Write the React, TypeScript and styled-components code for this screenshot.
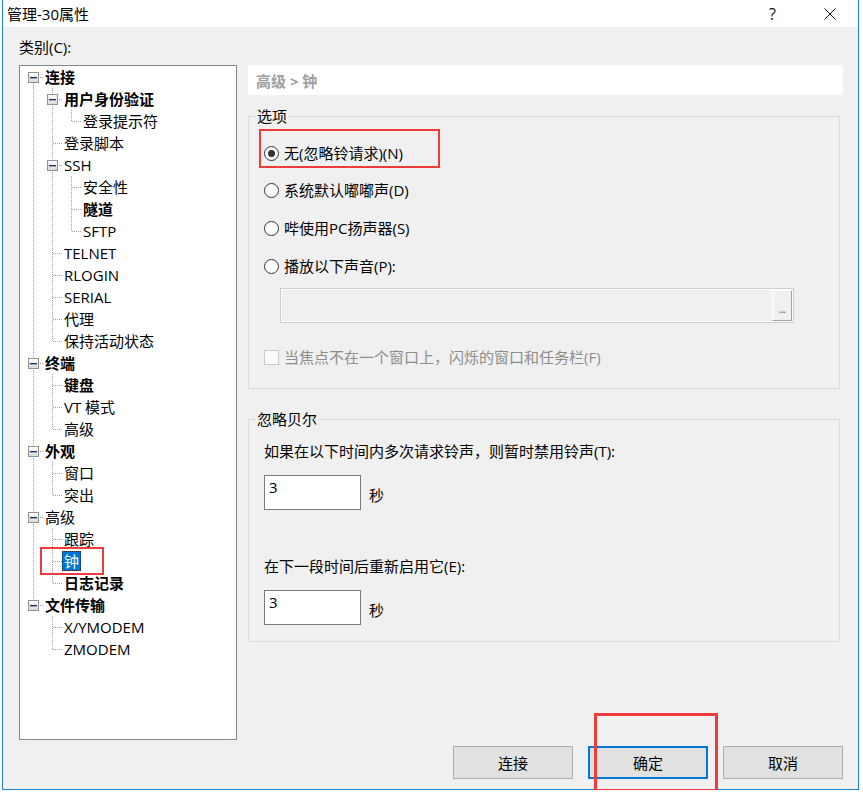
import React from 'react';
import styled, { createGlobalStyle } from 'styled-components';

const GlobalStyle = createGlobalStyle`
  html, body {
    margin: 0;
    padding: 0;
    background: #ffffff;
  }
  body {
    font-family: "Open Sans", "Noto Sans CJK SC", sans-serif;
    font-size: 15px;
    color: #000;
  }
  * {
    box-sizing: border-box;
  }
`;

type TreeNode = {
  label: string;
  bold?: boolean;
  selected?: boolean;
  marked?: boolean;
  children?: TreeNode[];
};

type TreeRow = {
  node: TreeNode;
  level: number;
  guides: boolean[];
  up: boolean;
  down: boolean;
};

const categories: TreeNode[] = [
  {
    label: '连接',
    bold: true,
    children: [
      { label: '用户身份验证', bold: true, children: [{ label: '登录提示符' }] },
      { label: '登录脚本' },
      {
        label: 'SSH',
        children: [{ label: '安全性' }, { label: '隧道', bold: true }, { label: 'SFTP' }],
      },
      { label: 'TELNET' },
      { label: 'RLOGIN' },
      { label: 'SERIAL' },
      { label: '代理' },
      { label: '保持活动状态' },
    ],
  },
  {
    label: '终端',
    bold: true,
    children: [{ label: '键盘', bold: true }, { label: 'VT 模式' }, { label: '高级' }],
  },
  {
    label: '外观',
    bold: true,
    children: [{ label: '窗口' }, { label: '突出' }],
  },
  {
    label: '高级',
    children: [
      { label: '跟踪' },
      { label: '钟', selected: true, marked: true },
      { label: '日志记录', bold: true },
    ],
  },
  {
    label: '文件传输',
    bold: true,
    children: [{ label: 'X/YMODEM' }, { label: 'ZMODEM' }],
  },
];

// flatten the tree, remembering which guide lines each row has to draw
const flatten = (nodes: TreeNode[], level: number, guides: boolean[]): TreeRow[] =>
  nodes.flatMap((node, i) => {
    const last = i === nodes.length - 1;
    const row: TreeRow = { node, level, guides, up: level > 0 || i > 0, down: !last };
    return [row, ...flatten(node.children ?? [], level + 1, [...guides, !last])];
  });

const rows = flatten(categories, 0, []);

const Window = styled.div`
  width: 857px;
  height: 790px;
  margin-left: 2px;
  border: 1px solid #1883d7;
  border-top: none;
  background: #f0f0f0;
  display: flex;
  flex-direction: column;
`;

const TitleBar = styled.div`
  height: 27px;
  flex: none;
  background: #ffffff;
  display: flex;
  align-items: center;
`;

const Title = styled.div`
  flex: 1;
  padding-left: 4px;
  font-size: 15px;
  line-height: 20px;
`;

const CaptionButton = styled.div`
  width: 57px;
  height: 27px;
  display: flex;
  align-items: center;
  justify-content: center;
  font-size: 16px;
  color: #111;
`;

const Body = styled.div`
  flex: 1;
  display: flex;
  flex-direction: column;
  padding: 10px 15px 10px 16px;
`;

const MainGrid = styled.div`
  display: grid;
  grid-template-columns: 218px 595px;
  grid-template-rows: 20px 675px;
  column-gap: 11px;
  row-gap: 8px;
`;

const CategoryLabel = styled.div`
  grid-column: 1;
  grid-row: 1;
  line-height: 20px;
`;

const Tree = styled.div`
  grid-column: 1;
  grid-row: 2;
  background: #ffffff;
  border: 1px solid #828790;
  overflow: hidden;
`;

const Row = styled.div`
  position: relative;
  height: 22px;
  display: flex;
  padding-left: 4px;
`;

const dots = (dir: string) =>
  `repeating-linear-gradient(${dir}, #a0a0a0 0 1px, transparent 1px 2px)`;

const Cell = styled.span<{ $up?: boolean; $down?: boolean; $branch?: boolean }>`
  position: relative;
  width: 19px;
  flex: none;

  &::before {
    content: '';
    display: ${({ $up, $down }) => ($up || $down ? 'block' : 'none')};
    position: absolute;
    left: 9px;
    width: 1px;
    top: ${({ $up }) => ($up ? '0' : '11px')};
    bottom: ${({ $down }) => ($down ? '0' : '11px')};
    background: ${dots('to bottom')};
  }

  &::after {
    content: '';
    display: ${({ $branch }) => ($branch ? 'block' : 'none')};
    position: absolute;
    left: 10px;
    right: 0;
    top: 11px;
    height: 1px;
    background: ${dots('to left')};
  }
`;

const Expander = styled.span`
  position: absolute;
  left: 4px;
  top: 6px;
  width: 11px;
  height: 11px;
  z-index: 1;
  border: 1px solid #919191;
  background: linear-gradient(#fdfdfd, #dadada);

  &::after {
    content: '';
    position: absolute;
    left: 1px;
    right: 1px;
    top: 4px;
    height: 1px;
    background: #1c305c;
    box-shadow: 0 1px 0 rgba(28, 48, 92, 0.35);
  }
`;

const NodeLabel = styled.span<{ $bold?: boolean; $selected?: boolean }>`
  margin: 1px 0;
  padding: 0 2px;
  line-height: 20px;
  white-space: nowrap;
  font-weight: ${({ $bold }) => ($bold ? 700 : 400)};
  background: ${({ $selected }) => ($selected ? '#0078d7' : 'transparent')};
  color: ${({ $selected }) => ($selected ? '#ffffff' : '#000000')};
  outline: ${({ $selected }) => ($selected ? '1px dotted #222' : 'none')};
  outline-offset: -1px;
`;

const TreeMark = styled.span`
  position: absolute;
  left: 20px;
  top: -3px;
  width: 64px;
  height: 28px;
  border: 2px solid #ee3b3b;
  pointer-events: none;
`;

const Panel = styled.div`
  grid-column: 2;
  grid-row: 2;
  display: flex;
  flex-direction: column;
`;

const Breadcrumb = styled.div`
  height: 30px;
  background: #ffffff;
  padding-left: 8px;
  display: flex;
  align-items: center;
  color: #a0a0a0;
  font-weight: 700;
`;

const Group = styled.fieldset<{ $top: number; $bottom: number }>`
  margin: ${({ $top }) => $top}px 3px 0 0;
  padding: 0 0 ${({ $bottom }) => $bottom}px 15px;
  min-width: 0;
  border: 1px solid #dcdcdc;
  display: flex;
  flex-direction: column;
  align-items: flex-start;
`;

const Legend = styled.legend`
  margin-left: -8px;
  padding: 0 1px;
  line-height: 16px;
`;

const RadioMark = styled.div`
  margin: 5px 0 0 -5px;
  width: 181px;
  height: 39px;
  padding: 14px 0 0 3px;
  border: 2px solid #ee3b3b;
`;

const OptionRow = styled.label<{ $gap?: number; $disabled?: boolean }>`
  display: flex;
  align-items: center;
  gap: 5px;
  line-height: 16px;
  height: 16px;
  margin-top: ${({ $gap }) => $gap ?? 0}px;
  color: ${({ $disabled }) => ($disabled ? '#8d8d8d' : '#000')};
  white-space: nowrap;
`;

const RadioCircle = styled.span<{ $checked?: boolean }>`
  position: relative;
  width: 15px;
  height: 15px;
  flex: none;
  border-radius: 50%;
  border: 1px solid #333333;
  background: #ffffff;

  &::after {
    content: '';
    display: ${({ $checked }) => ($checked ? 'block' : 'none')};
    position: absolute;
    left: 3px;
    top: 3px;
    width: 7px;
    height: 7px;
    border-radius: 50%;
    background: #333333;
  }
`;

const CheckBox = styled.span`
  width: 15px;
  height: 15px;
  flex: none;
  border: 1px solid #cacaca;
  background: #fbfbfb;
`;

const SoundField = styled.div`
  margin: 14px 0 0 16px;
  width: 514px;
  height: 35px;
  padding: 1px;
  border: 1px solid #cdcdcd;
  box-shadow: inset 0 0 0 1px #ffffff;
  background: #f0f0f0;
  display: flex;
  justify-content: flex-end;
`;

const BrowseButton = styled.div`
  width: 20px;
  border: 1px solid;
  border-color: #ffffff #a3a3a3 #a3a3a3 #ffffff;
  background: #f0f0f0;
  color: #777;
  font-size: 12px;
  line-height: 12px;
  display: flex;
  justify-content: center;
  padding-top: 12px;
  letter-spacing: -1px;
`;

const Prompt = styled.div<{ $gap: number }>`
  margin-top: ${({ $gap }) => $gap}px;
  line-height: 16px;
  white-space: nowrap;
`;

const SecondsRow = styled.div`
  margin-top: 16px;
  display: flex;
  align-items: center;
  gap: 8px;
`;

const NumberBox = styled.div`
  width: 97px;
  height: 35px;
  padding: 1px 4px;
  line-height: 20px;
  border: 1px solid #7a7a7a;
  background: #ffffff;
`;

const Unit = styled.span`
  padding-top: 3px;
`;

const Footer = styled.div`
  margin-top: 6px;
  display: flex;
  justify-content: flex-end;
  gap: 15px;
`;

const Button = styled.div<{ $default?: boolean }>`
  position: relative;
  width: 120px;
  height: 33px;
  display: flex;
  align-items: center;
  justify-content: center;
  background: #e1e1e1;
  border: ${({ $default }) => ($default ? '2px solid #0078d7' : '1px solid #adadad')};
`;

const ButtonMark = styled.span`
  position: absolute;
  left: 4px;
  top: -35px;
  width: 124px;
  height: 79px;
  border: 3px solid #ee3b3b;
  pointer-events: none;
`;

const CloseIcon = () => (
  <svg width="12" height="12" viewBox="0 0 12 12">
    <path d="M0.5 0.5 L11.5 11.5 M11.5 0.5 L0.5 11.5" stroke="#111" strokeWidth="1" />
  </svg>
);

export default function App() {
  return (
    <>
      <GlobalStyle />
      <Window>
        <TitleBar>
          <Title>管理-30属性</Title>
          <CaptionButton>?</CaptionButton>
          <CaptionButton>
            <CloseIcon />
          </CaptionButton>
        </TitleBar>
        <Body>
          <MainGrid>
            <CategoryLabel>类别(C):</CategoryLabel>
            <Tree>
              {rows.map((row, i) => (
                <Row key={i}>
                  {row.guides.map((g, j) => (
                    <Cell key={j} $up={g} $down={g} />
                  ))}
                  <Cell $up={row.up} $down={row.down} $branch>
                    {row.node.children && <Expander />}
                  </Cell>
                  <NodeLabel $bold={row.node.bold} $selected={row.node.selected}>
                    {row.node.label}
                  </NodeLabel>
                  {row.node.marked && <TreeMark />}
                </Row>
              ))}
            </Tree>
            <Panel>
              <Breadcrumb>高级 &gt; 钟</Breadcrumb>
              <Group $top={13} $bottom={23}>
                <Legend>选项</Legend>
                <RadioMark>
                  <OptionRow>
                    <RadioCircle $checked />
                    无(忽略铃请求)(N)
                  </OptionRow>
                </RadioMark>
                <OptionRow $gap={14}>
                  <RadioCircle />
                  系统默认嘟嘟声(D)
                </OptionRow>
                <OptionRow $gap={22}>
                  <RadioCircle />
                  哔使用PC扬声器(S)
                </OptionRow>
                <OptionRow $gap={22}>
                  <RadioCircle />
                  播放以下声音(P):
                </OptionRow>
                <SoundField>
                  <BrowseButton>...</BrowseButton>
                </SoundField>
                <OptionRow $gap={26} $disabled>
                  <CheckBox />
                  当焦点不在一个窗口上，闪烁的窗口和任务栏(F)
                </OptionRow>
              </Group>
              <Group $top={22} $bottom={16}>
                <Legend>忽略贝尔</Legend>
                <Prompt $gap={16}>如果在以下时间内多次请求铃声，则暂时禁用铃声(T):</Prompt>
                <SecondsRow>
                  <NumberBox>3</NumberBox>
                  <Unit>秒</Unit>
                </SecondsRow>
                <Prompt $gap={48}>在下一段时间后重新启用它(E):</Prompt>
                <SecondsRow>
                  <NumberBox>3</NumberBox>
                  <Unit>秒</Unit>
                </SecondsRow>
              </Group>
            </Panel>
          </MainGrid>
          <Footer>
            <Button>连接</Button>
            <Button $default>
              确定
              <ButtonMark />
            </Button>
            <Button>取消</Button>
          </Footer>
        </Body>
      </Window>
    </>
  );
}
